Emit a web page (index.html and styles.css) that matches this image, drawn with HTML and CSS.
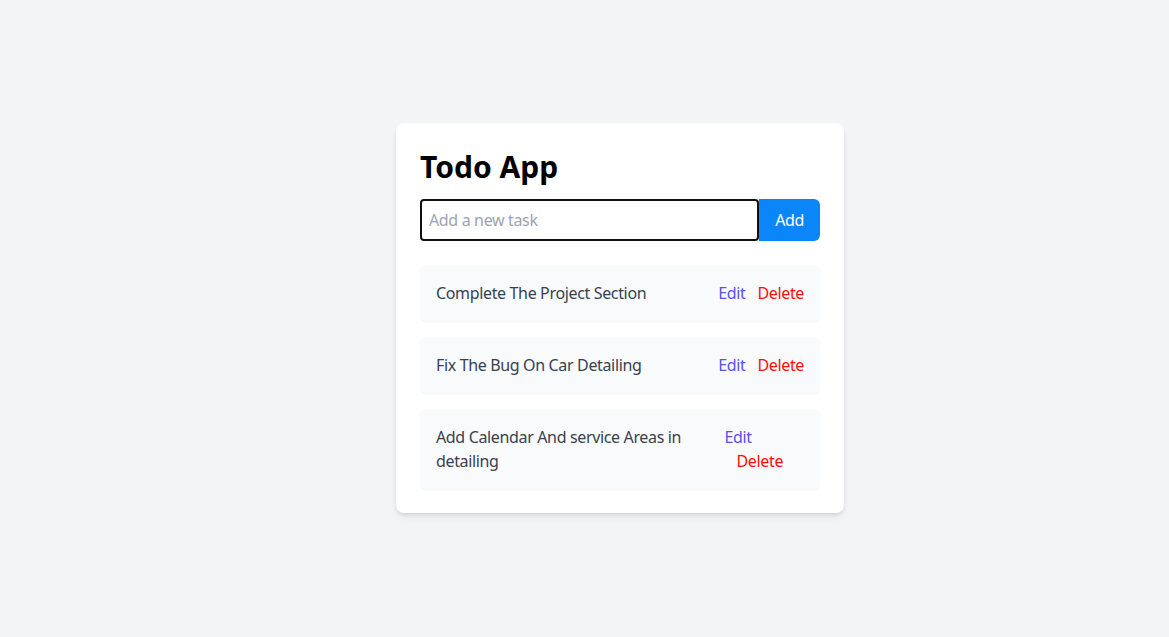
FILE: index.html
```html
<!DOCTYPE html>
<html lang="en">
<head>
<meta charset="utf-8">
<title>Todo App</title>
<link rel="stylesheet" href="styles.css">
</head>
<body>
<main class="page">
  <section class="card">
    <h1 class="title">Todo App</h1>
    <form class="add-form">
      <input class="task-input" type="text" placeholder="Add a new task">
      <button class="add-btn" type="button">Add</button>
    </form>
    <ul class="list">
      <li class="item">
        <span class="item-text">Complete The Project Section</span>
        <div class="actions"><button class="edit">Edit</button><button class="delete">Delete</button></div>
      </li>
      <li class="item">
        <span class="item-text">Fix The Bug On Car Detailing</span>
        <div class="actions"><button class="edit">Edit</button><button class="delete">Delete</button></div>
      </li>
      <li class="item">
        <span class="item-text">Add Calendar And service Areas in detailing</span>
        <div class="actions"><button class="edit">Edit</button><button class="delete">Delete</button></div>
      </li>
    </ul>
  </section>
</main>
</body>
</html>
```
FILE: styles.css
```css
* { box-sizing: border-box; }
html, body { margin: 0; padding: 0; }
body {
  background: #f3f4f6;
  font-family: "Noto Sans", "Open Sans", sans-serif;
  font-size: 16px;
  line-height: 24px;
  letter-spacing: -0.35px;
  color: #374151;
}
.page {
  min-height: 637px;
  padding: 0 0 1px 71px;
  display: flex;
  align-items: center;
  justify-content: center;
}
.card {
  width: 448px;
  background: #fff;
  border-radius: 8px;
  padding: 24px;
  box-shadow: 0 4px 6px -1px rgba(0,0,0,0.1), 0 2px 4px -2px rgba(0,0,0,0.1);
}
.title {
  margin: 0 0 16px;
  padding-top: 2px;
  height: 36px;
  font-size: 30px;
  line-height: 36px;
  font-weight: 700;
  letter-spacing: 0;
  color: #000;
}
.add-form {
  display: flex;
  margin: 0 0 24px;
}
.task-input {
  flex: 1;
  min-width: 0;
  height: 42px;
  border: 2px solid #111;
  border-radius: 4px;
  padding: 0 7px;
  font: inherit;
  letter-spacing: inherit;
  color: #111;
  outline: none;
}
.task-input::placeholder { color: #9ca3af; }
.add-btn {
  height: 42px;
  border: 0;
  padding: 0 16px;
  background: #0a86f9;
  color: #fff;
  font: inherit;
  letter-spacing: inherit;
  border-radius: 0 6px 6px 0;
}
.list {
  list-style: none;
  margin: 0;
  padding: 0;
  display: flex;
  flex-direction: column;
  gap: 16px;
}
.item {
  display: flex;
  justify-content: space-between;
  align-items: center;
  background: #f9fafb;
  border-radius: 6px;
  padding: 16px;
  box-shadow: 0 1px 2px 0 rgba(0,0,0,0.05);
}
.actions button {
  background: none;
  border: 0;
  padding: 0;
  font: inherit;
  letter-spacing: inherit;
  line-height: 24px;
}
.edit { color: #5b50e6; }
.delete { color: #ff0a0a; margin-left: 12px; }
```
